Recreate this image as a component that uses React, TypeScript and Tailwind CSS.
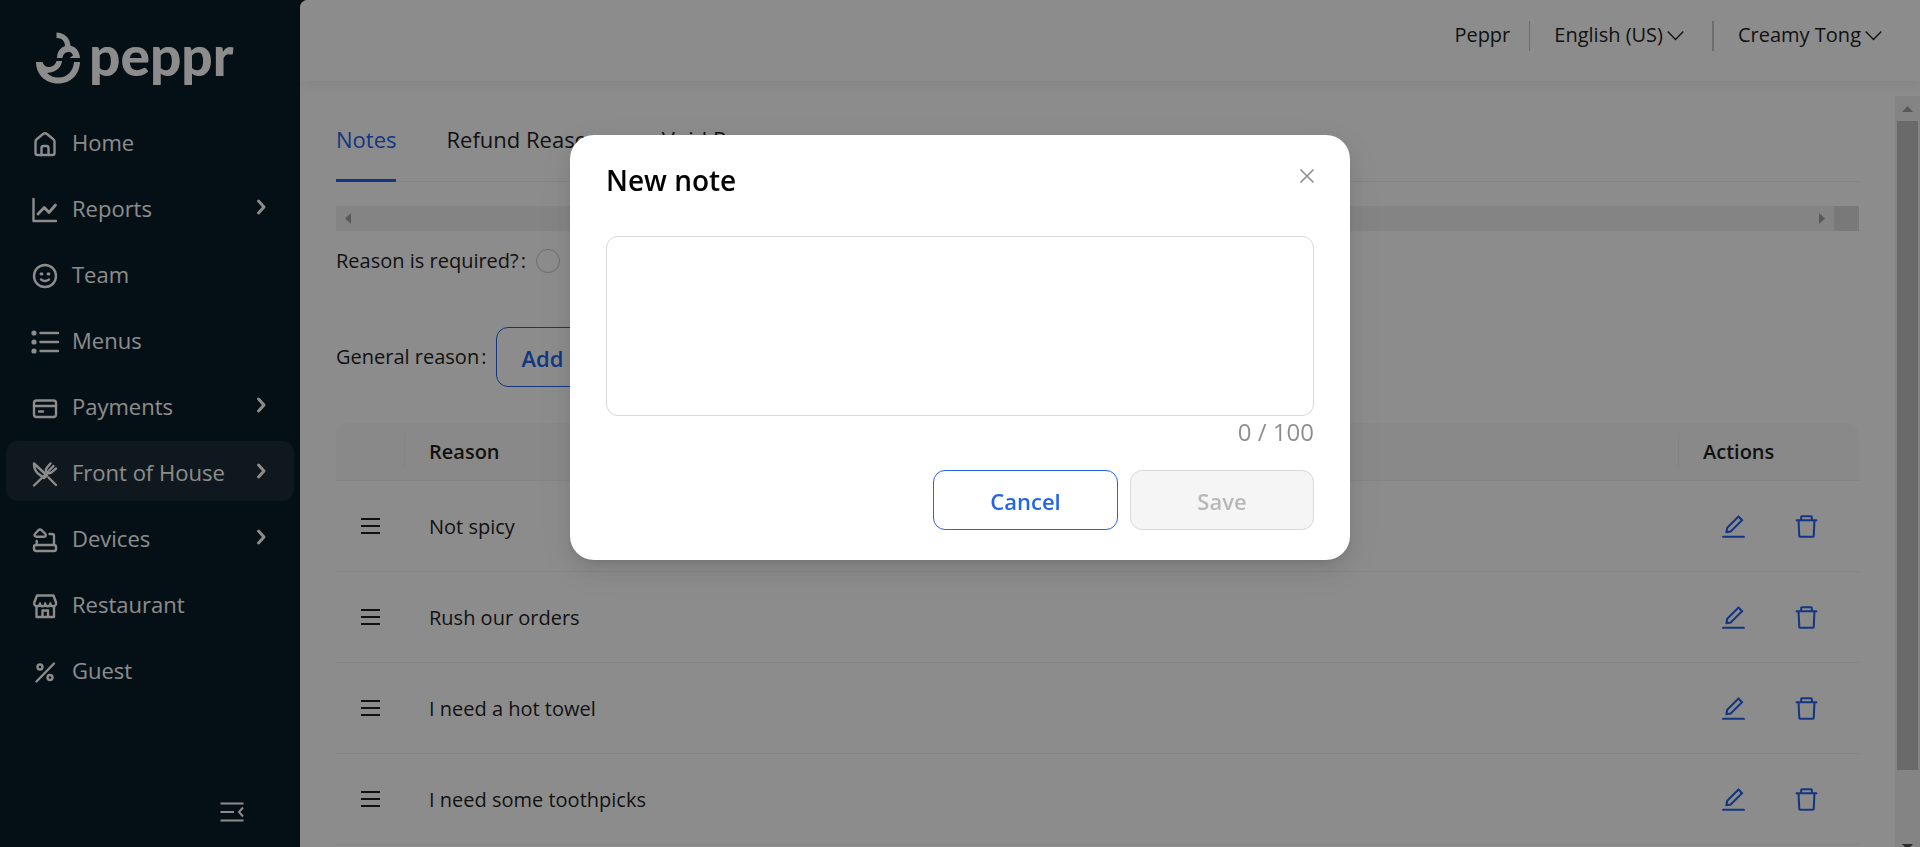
import type { ReactNode } from "react";
import { AiOutlineDelete, AiOutlineEdit } from "react-icons/ai";

type NavItem = { label: string; icon: ReactNode; expandable?: boolean; active?: boolean };

const navItems: NavItem[] = [
  {
    label: "Home",
    icon: (
      <>
        <path d="M5.5 12.5c0-1 .4-1.7 1.2-2.3L13 5q2-1.700 4 0l6.300 5.200c.8.600 1.200 1.300 1.200 2.300V24a2 2 0 0 1-2 2h-15a2 2 0 0 1-2-2z" />
        <path d="M11.500 26v-7a2 2 0 0 1 2-2h3a2 2 0 0 1 2 2v7" />
      </>
    ),
  },
  {
    label: "Reports",
    expandable: true,
    icon: (
      <>
        <path d="M3.500 4v22h22.500" />
        <path d="M8 19l6.300-6.500 4.700 5 6.500-7.500" strokeWidth="2.800" />
      </>
    ),
  },
  {
    label: "Team",
    icon: (
      <>
        <circle cx="15" cy="15" r="11" />
        <path d="M11 13h1M18 13h1" strokeWidth="2.800" />
        <path d="M11 18.500q4 3 8 0" />
      </>
    ),
  },
  {
    label: "Menus",
    icon: (
      <>
        <path d="M10.500 6H28M10.500 15H28M10.500 24H28" />
        <g fill="currentColor" stroke="none">
          <circle cx="4" cy="6" r="2.600" />
          <circle cx="4" cy="15" r="2.600" />
          <circle cx="4" cy="24" r="2.600" />
        </g>
      </>
    ),
  },
  {
    label: "Payments",
    expandable: true,
    icon: (
      <>
        <rect x="4" y="7.500" width="22" height="16.500" rx="2.500" />
        <path d="M4 13h22M9 18.500h4" />
      </>
    ),
  },
  {
    label: "Front of House",
    expandable: true,
    active: true,
    icon: (
      <>
        <path d="M4 4.500l13 12-3 2.500-6-4.500c-3-2.500-4-6-4-10z" />
        <path d="M18.500 18.500l7.500 7.500M4 26.500l14-13.500" />
        <path d="M20.500 4.500l-3.500 4c-1.500 2-1.500 3.500-.2 4.800s3 1.300 4.700 0l4.500-3.800M23.500 7l-4.500 4.500" />
      </>
    ),
  },
  {
    label: "Devices",
    expandable: true,
    icon: (
      <>
        <rect x="4" y="20" width="22" height="6" rx="2" />
        <path d="M6.700 16v4M19.500 9h2.500a2 2 0 0 1 2 2v9" />
        <path d="M8.500 5.200q1.500-1.400 3 0l3.500 3.300c1.500 1.700.8 3.200-1 3.200H6.500c-2 0-2.700-1.700-1.200-3.200z" />
      </>
    ),
  },
  {
    label: "Restaurant",
    icon: (
      <>
        <path d="M6.500 15v11h17.500V15M12.500 26v-6.500h5.500V26" />
        <path d="M7 4.500h16.500l2.500 7c.5 2-.8 3.800-2.800 3.800s-2.800-1.300-2.800-2.800c0 1.500-1 2.800-2.600 2.800S15.200 14 15.200 12.500c0 1.500-1 2.800-2.600 2.800S10 14 10 12.500c0 1.500-1 2.800-3 2.800s-3.200-1.800-2.700-3.800z" />
      </>
    ),
  },
  {
    label: "Guest",
    icon: (
      <>
        <path d="M24 6.500l-17.500 18" />
        <circle cx="10" cy="10" r="2.500" />
        <circle cx="20" cy="20.500" r="2.500" />
      </>
    ),
  },
];

const reasons = ["Not spicy", "Rush our orders", "I need a hot towel", "I need some toothpicks"];

function Logo() {
  return (
    <a href="#home" aria-label="peppr" className="flex h-[111px] shrink-0 items-start pl-9 text-white">
      <svg viewBox="36 31 45 53" className="mt-[31px] h-[53px] w-[45px] shrink-0" fill="currentColor" aria-hidden="true">
        <path d="M56.500 32.500C64 32.500 70.500 38 70.500 46.500h-5.500C65 41 62 38 56.500 38z" />
        <path d="M57 58c0-7.500 5-12.500 11.500-12.500S79.500 50.500 80 58H69.500l3.500-2.500c-.8-2.500-2.300-3.500-4.200-3.500-3.300 0-5.800 2-6.300 6z" />
        <path d="M36 62h6.500c1 3.500 4 5.500 7 5 4-.5 6-3 7-6h5.500c-.5 6-5.500 11.500-15 12 3 3 7 4.500 11.500 4.500 9 0 14.500-6 15.500-15.500H80c-.5 12.500-9 21.500-22 21.500C45 83.500 36 74 36 62z" />
      </svg>
      <span className="mt-[19px] ml-2 font-['Lato',sans-serif] text-[55px] leading-[72px] font-black">peppr</span>
    </a>
  );
}

function Sidebar() {
  return (
    <aside className="flex w-[300px] shrink-0 flex-col bg-[#0a1c28] text-white">
      <Logo />
      <nav className="flex flex-col gap-1.5 px-1.5">
        {navItems.map((item) => (
          <a
            key={item.label}
            href="#"
            className={`flex h-[60px] items-center rounded-xl pr-6 pl-6 text-[22px] ${item.active ? "bg-white/8" : ""}`}
          >
            <svg
              viewBox="0 0 30 30"
              className="mt-1.5 size-[30px] shrink-0"
              fill="none"
              stroke="currentColor"
              strokeWidth="2.400"
              strokeLinecap="round"
              strokeLinejoin="round"
              aria-hidden="true"
            >
              {item.icon}
            </svg>
            <span className="ml-3 flex-1 pt-0.5">{item.label}</span>
            {item.expandable && (
              <svg viewBox="0 0 18 18" className="size-[18px]" fill="none" stroke="currentColor" strokeWidth="3" strokeLinecap="round" strokeLinejoin="round" aria-hidden="true">
                <path d="M6.500 3l5.500 6-5.500 6" />
              </svg>
            )}
          </a>
        ))}
      </nav>
      <button type="button" aria-label="Collapse menu" className="mt-auto mr-14 mb-[23px] self-end">
        <svg viewBox="0 0 24 24" className="size-6" fill="none" stroke="currentColor" strokeWidth="2" aria-hidden="true">
          <path d="M.5 3.500h23M.5 12H14M.5 20.500h23M23 7.500L19 12l4 4.500" />
        </svg>
      </button>
    </aside>
  );
}

function ChevronDown() {
  return (
    <svg viewBox="0 0 17 18" className="h-[18px] w-[17px]" fill="none" stroke="currentColor" strokeWidth="1.300" aria-hidden="true">
      <path d="M.7 5.500l7.800 8 7.800-8" />
    </svg>
  );
}

function Header() {
  return (
    <header className="relative flex h-[81px] shrink-0 items-start justify-end bg-white pt-[21px] pr-[38px] text-xl leading-7 shadow-[0_2px_14px_rgba(0,0,0,0.08)]">
      <a href="#peppr" className="pr-[19px]">
        Peppr
      </a>
      <span className="h-[30px] w-px bg-[#c8c8c8]" />
      <button type="button" className="flex items-center gap-1 pr-7 pl-6">
        English (US)
        <ChevronDown />
      </button>
      <span className="h-[30px] w-0.5 bg-[#c8c8c8]" />
      <button type="button" className="flex items-center gap-1 pl-6">
        Creamy Tong
        <ChevronDown />
      </button>
    </header>
  );
}

function Tabs() {
  return (
    <div role="tablist" className="flex h-[86px] gap-[50px] border-b border-[#f0f0f0] text-[22px]">
      <button type="button" role="tab" aria-selected="true" className="-mb-px border-b-3 border-[#2563eb] pt-1 text-[#2563eb]">
        Notes
      </button>
      <button type="button" role="tab" aria-selected="false" className="pt-0.5">
        Refund Reasons
      </button>
      <button type="button" role="tab" aria-selected="false" className="pt-0.5">
        Void Reasons
      </button>
    </div>
  );
}

function HorizontalScrollbar() {
  return (
    <div className="mt-6 flex h-[25px] items-center bg-[#f1f1f1] text-[#a3a3a3]" aria-hidden="true">
      <svg viewBox="0 0 25 25" className="size-[25px]" fill="currentColor">
        <path d="M15 7v11l-6-5.500z" />
      </svg>
      <svg viewBox="0 0 25 25" className="ml-auto size-[25px]" fill="currentColor">
        <path d="M10 7v11l6-5.500z" />
      </svg>
      <span className="size-[25px] bg-[#dcdcdc]" />
    </div>
  );
}

function VerticalScrollbar() {
  return (
    <div className="flex w-[25px] shrink-0 flex-col bg-[#f1f1f1]" aria-hidden="true">
      <svg viewBox="0 0 25 25" className="size-[25px] shrink-0" fill="#a3a3a3">
        <path d="M7 16h11l-5.500-6z" />
      </svg>
      <span className="mx-0.5 flex-[650] bg-[#c1c1c1]" />
      <span className="flex-[62]" />
      <svg viewBox="0 0 25 25" className="-mb-[10px] size-[25px] shrink-0" fill="#505050">
        <path d="M7 12h11l-5.500 6z" />
      </svg>
    </div>
  );
}

function ReasonTable() {
  return (
    <table className="mt-9 w-full border-separate border-spacing-0 text-left">
      <thead>
        <tr className="h-[58px]">
          <th className="w-[69px] rounded-tl-xl border-b border-[#f0f0f0] bg-[#fafafa] p-0">
            <span className="block h-[35px] border-r border-[#f0f0f0]" />
          </th>
          <th className="border-b border-[#f0f0f0] bg-[#fafafa] p-0 font-semibold">
            <span className="block h-[35px] border-r border-[#f0f0f0] pl-6 leading-9">Reason</span>
          </th>
          <th className="w-[180px] rounded-tr-xl border-b border-[#f0f0f0] bg-[#fafafa] p-0 pl-6 leading-9 font-semibold">Actions</th>
        </tr>
      </thead>
      <tbody>
        {reasons.map((reason) => (
          <tr key={reason} className="h-[91px]">
            <td className="border-b border-[#f0f0f0] p-0 pl-[25px]">
              <svg viewBox="0 0 19 18" className="h-[18px] w-[19px]" stroke="currentColor" strokeWidth="2" aria-hidden="true">
                <path d="M0 2h19M0 9h19M0 16h19" />
              </svg>
            </td>
            <td className="border-b border-[#f0f0f0] p-0 pt-0.5 pl-6">{reason}</td>
            <td className="border-b border-[#f0f0f0] p-0 pl-10">
              <div className="flex gap-11 text-[#2563eb]">
                <button type="button" aria-label={`Edit ${reason}`}>
                  <AiOutlineEdit className="size-[29px]" />
                </button>
                <button type="button" aria-label={`Delete ${reason}`}>
                  <AiOutlineDelete className="size-[29px]" />
                </button>
              </div>
            </td>
          </tr>
        ))}
      </tbody>
    </table>
  );
}

function NewNoteDialog() {
  return (
    <div className="fixed inset-0 flex items-start justify-center bg-black/45 pt-[135px]">
      <section
        role="dialog"
        aria-modal="true"
        aria-labelledby="dialog-title"
        className="w-[780px] rounded-3xl bg-white px-9 pt-[22px] pb-[30px] shadow-[0_8px_20px_rgba(0,0,0,0.08),0_4px_8px_-4px_rgba(0,0,0,0.12),0_11px_35px_10px_rgba(0,0,0,0.05)]"
      >
        <div className="flex items-start justify-between">
          <h2 id="dialog-title" className="text-[28px] leading-[46px] font-semibold text-black">
            New note
          </h2>
          <button type="button" aria-label="Close" className="mt-2.5 -mr-0.5 text-black/45">
            <svg viewBox="0 0 18 18" className="size-[18px]" fill="none" stroke="currentColor" strokeWidth="1.600" aria-hidden="true">
              <path d="M2.500 2.500l13 13M15.500 2.500l-13 13" />
            </svg>
          </button>
        </div>
        <textarea
          aria-label="Note"
          maxLength={100}
          className="mt-[33px] block h-[180px] w-full resize-none rounded-xl border border-[#d9d9d9] px-4 py-2 text-[22px] outline-none"
        />
        <p className="text-right text-2xl leading-8 text-black/45">0 / 100</p>
        <div className="mt-[22px] flex justify-end gap-3 text-[22px] font-semibold">
          <button type="button" className="h-[60px] w-[185px] rounded-xl border border-[#2563eb] pt-0.5 text-[#2563eb]">
            Cancel
          </button>
          <button type="button" disabled className="h-[60px] w-[184px] rounded-xl border border-[#d9d9d9] bg-[#f5f5f5] pt-0.5 text-black/25">
            Save
          </button>
        </div>
      </section>
    </div>
  );
}

export default function App() {
  return (
    <div className="flex h-screen overflow-hidden bg-[#0a1c28] font-['Open_Sans','Noto_Sans',sans-serif] text-xl text-[#1f1f1f]">
      <Sidebar />
      <div className="flex min-w-0 flex-1 flex-col overflow-hidden rounded-tl-lg bg-white">
        <Header />
        <div className="mt-[15px] flex min-h-0 flex-1">
          <main className="min-w-0 flex-1 overflow-hidden pr-9 pl-9">
            <Tabs />
            <HorizontalScrollbar />
            <div className="mt-[15px] flex h-[30px] items-center">
              <label htmlFor="reason-required" className="flex gap-0.5">
                <span>Reason is required?</span>
                <span>:</span>
              </label>
              <input
                id="reason-required"
                type="radio"
                className="ml-2.5 size-6 appearance-none rounded-full border border-[#c8c8c8] bg-white"
              />
            </div>
            <div className="mt-[51px] flex h-[60px] items-center">
              <span className="flex gap-0.5">
                <span>General reason</span>
                <span>:</span>
              </span>
              <button type="button" className="ml-2.5 h-[60px] rounded-xl border border-[#2563eb] px-6 pt-0.5 text-[22px] font-semibold text-[#2563eb]">
                Add
              </button>
            </div>
            <ReasonTable />
          </main>
          <VerticalScrollbar />
        </div>
      </div>
      <NewNoteDialog />
    </div>
  );
}
